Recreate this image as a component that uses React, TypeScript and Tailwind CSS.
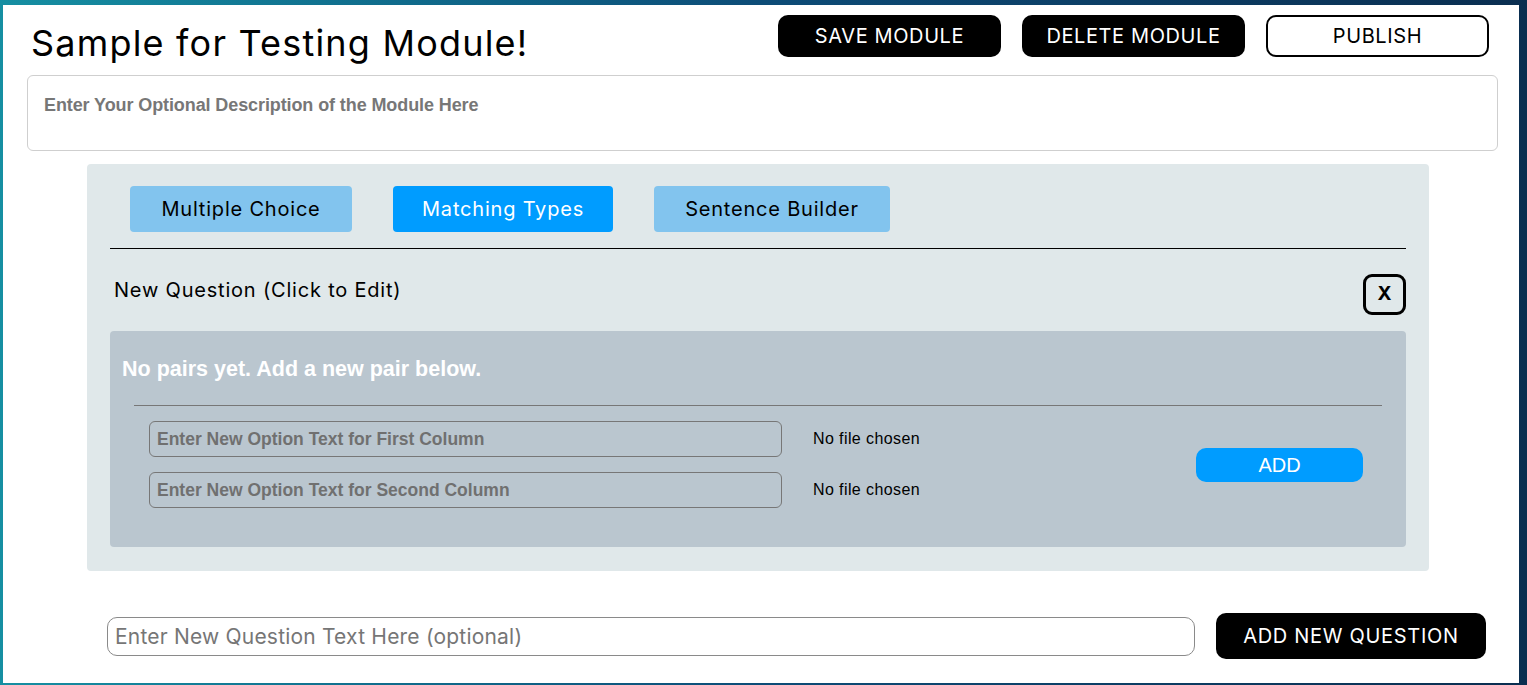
import React from "react";

const sans = "font-['Inter','Noto_Sans',sans-serif]";
const arial = "font-['Liberation_Sans',Arial,sans-serif]";

function TopButton({ label, outline }: { label: string; outline?: boolean }) {
  return (
    <button
      className={`w-[223px] h-[42px] rounded-[10px] text-[20px] tracking-[0.6px] ${sans} ${
        outline ? "bg-white text-black border-2 border-black" : "bg-black text-white"
      }`}
    >
      {label}
    </button>
  );
}

function Tab({ label, active, width }: { label: string; active?: boolean; width: string }) {
  return (
    <button
      className={`h-[46px] ${width} rounded-[4px] text-[20px] tracking-[0.8px] ${sans} ${
        active ? "bg-[#009cff] text-white" : "bg-[#82c4ee] text-black"
      }`}
    >
      {label}
    </button>
  );
}

export default function App() {
  return (
    <div className="w-[1527px] h-[685px] bg-gradient-to-r from-[#168fa2] via-[#0d4c77] to-[#0a2e50] pt-[5px] pl-[3px] pr-[8px] pb-[2px] overflow-hidden">
      <div className="bg-white h-[678px] flex flex-col">
        {/* Header */}
        <div className="flex justify-between items-start pl-[28px] pr-[30px] pt-[10px]">
          <h1 className={`text-[36px] leading-[40px] mt-[8px] text-black tracking-[1.2px] ${sans}`}>
            Sample for Testing Module!
          </h1>
          <div className="flex gap-[21px]">
            <TopButton label="SAVE MODULE" />
            <TopButton label="DELETE MODULE" />
            <TopButton label="PUBLISH" outline />
          </div>
        </div>

        {/* Description */}
        <div className="ml-[24px] mr-[21px] mt-[12px] h-[76px] border border-[#cfcfcf] rounded-[6px] px-[16px] pt-[16px]">
          <span className={`text-[18px] font-bold text-[#777777] tracking-[-0.1px] ${arial}`}>
            Enter Your Optional Description of the Module Here
          </span>
        </div>

        {/* Question panel */}
        <div className="ml-[84px] w-[1342px] mt-[13px] h-[407px] bg-[#e0e8ea] rounded-[4px] px-[23px] pt-[22px]">
          <div className="flex gap-[41px] pl-[20px]">
            <Tab label="Multiple Choice" width="w-[222px]" />
            <Tab label="Matching Types" width="w-[220px]" active />
            <Tab label="Sentence Builder" width="w-[236px]" />
          </div>
          <div className="mt-[16px] border-t border-black" />
          <div className="flex justify-between items-start mt-[25px]">
            <span className={`text-[20px] tracking-[0.8px] text-black ml-[4px] mt-[1px] ${sans}`}>
              New Question (Click to Edit)
            </span>
            <button
              className={`w-[43px] h-[41px] border-[3px] border-black rounded-[9px] text-[19px] font-bold text-black ${sans}`}
            >
              X
            </button>
          </div>

          <div className="mt-[16px] h-[216px] bg-[#bac6cf] rounded-[4px] pt-[26px]">
            <p className={`pl-[12px] text-[21.5px] font-bold text-white leading-[24px] ${arial}`}>
              No pairs yet. Add a new pair below.
            </p>
            <div className="mx-[24px] mt-[24px] border-t border-[#777777]" />
            <div className="flex items-center mt-[15px] pl-[39px]">
              <div className="flex flex-col gap-[15px]">
                {["Enter New Option Text for First Column", "Enter New Option Text for Second Column"].map((p) => (
                  <div key={p} className="flex items-center">
                    <input
                      placeholder={p}
                      className={`w-[633px] h-[36px] border border-[#777777] rounded-[6px] bg-transparent px-[7px] text-[17.5px] font-bold placeholder:text-[#707070] outline-none ${arial}`}
                    />
                    <span className={`ml-[31px] text-[16px] tracking-[0.4px] text-black ${arial}`}>No file chosen</span>
                  </div>
                ))}
              </div>
              <button
                className={`ml-[276px] w-[167px] h-[34px] rounded-[10px] bg-[#009cff] text-white text-[20px] ${arial}`}
              >
                ADD
              </button>
            </div>
          </div>
        </div>

        {/* Bottom row */}
        <div className="flex items-center ml-[104px] mt-[42px] gap-[21px]">
          <input
            placeholder="Enter New Question Text Here (optional)"
            className={`w-[1088px] h-[39px] border border-[#8a8a8a] rounded-[10px] px-[7px] text-[21px] tracking-[0.2px] placeholder:text-[#767676] outline-none ${sans}`}
          />
          <button className={`w-[270px] h-[46px] rounded-[10px] bg-black text-white text-[20px] tracking-[0.7px] ${sans}`}>
            ADD NEW QUESTION
          </button>
        </div>
      </div>
    </div>
  );
}
